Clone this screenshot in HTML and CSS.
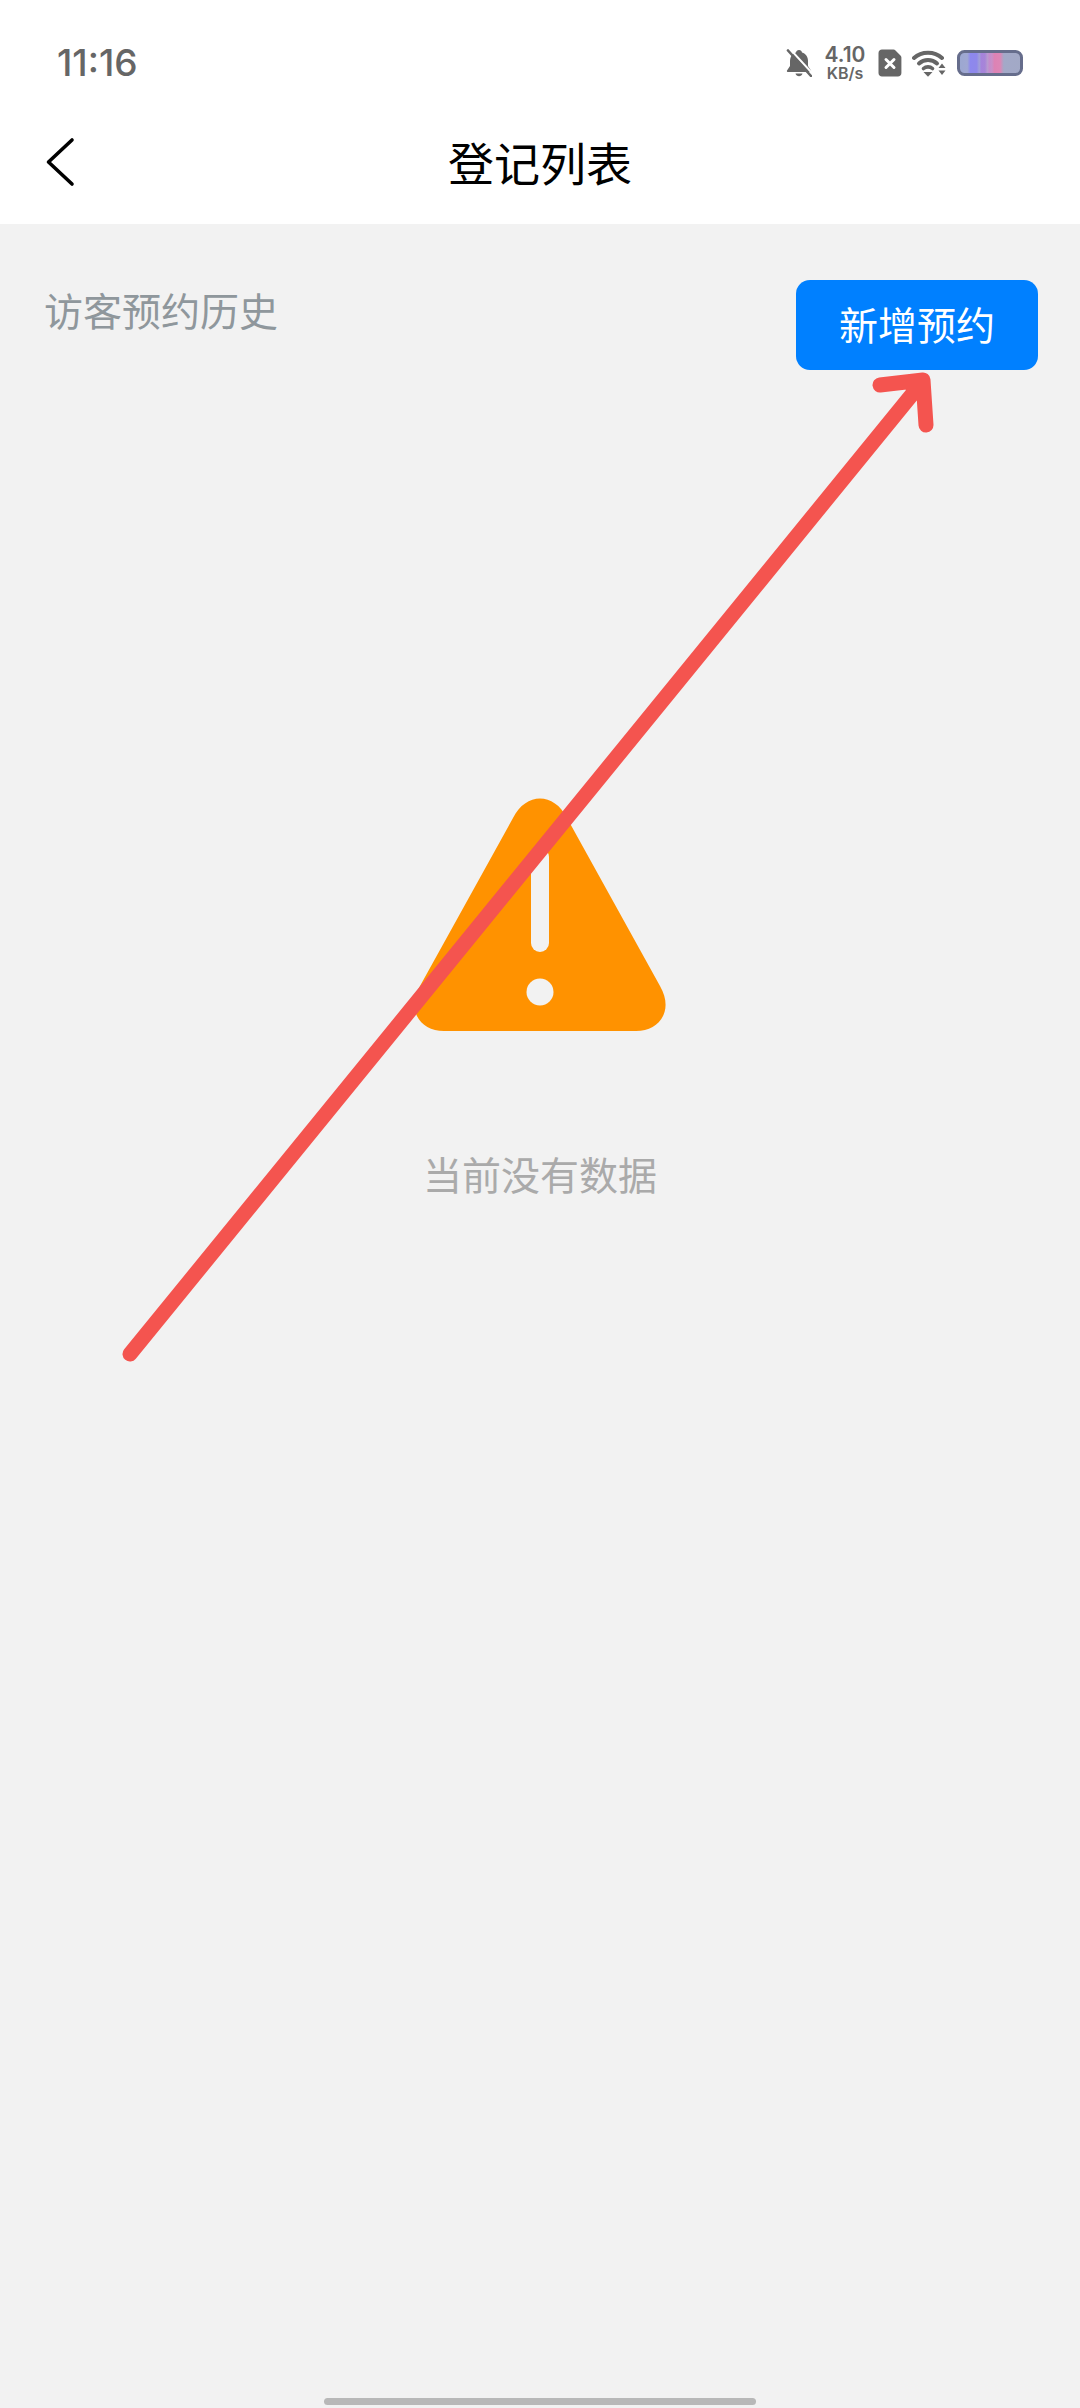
FILE: index.html
```html
<!DOCTYPE html>
<html>
<head>
    <title>登记列表</title>
    <link rel="stylesheet" href="styles.css">
</head>
<body>
    <div class="page">
        <div class="top-area">
            <div class="status-bar">
                <span class="time">11:16</span>
                <div class="status-icons">
                    <svg class="icon-bell" width="26" height="28" viewBox="0 0 26 28">
                        <path d="M13 1c1.700 0 2.800 1 3 2.400C20 4.600 22 8 22 12v5l3 4.500c.4.800-.1 1.500-1 1.500H2c-.9 0-1.400-.7-1-1.500L4 17v-5c0-4 2-7.400 6-8.600C10.200 2 11.300 1 13 1z" fill="#666"/>
                        <path d="M9.500 24.500h7c-.5 1.700-1.900 2.700-3.500 2.700s-3-1-3.500-2.700z" fill="#666"/>
                        <path d="M4 0l23 25" stroke="#fff" stroke-width="2"/>
                        <path d="M2 1.500l23 25.500" stroke="#666" stroke-width="2.600" stroke-linecap="round"/>
                    </svg>
                    <div class="net-speed">
                        <span class="net-value">4.10</span>
                        <span class="net-unit">KB/s</span>
                    </div>
                    <svg class="icon-sim" width="24" height="28" viewBox="0 0 24 28">
                        <path d="M4 0.500h11.500c.8 0 1.400.3 2 .9l5 5c.6.600.9 1.200.9 2V24c0 2-1.500 3.500-3.500 3.500H4C2 27.500.5 26 .5 24V4C.5 2 2 .5 4 .5z" fill="#666"/>
                        <path d="M8 10.500l8 8M16 10.500l-8 8" stroke="#fff" stroke-width="3" stroke-linecap="round"/>
                    </svg>
                    <svg class="icon-wifi" width="34" height="28" viewBox="0 0 34 28">
                        <path d="M2 9C9.500 2 22.500 2 30 9" fill="none" stroke="#666" stroke-width="4" stroke-linecap="round"/>
                        <path d="M7 14.500C12 9.800 20 9.800 25 14.500" fill="none" stroke="#666" stroke-width="4" stroke-linecap="round"/>
                        <path d="M11.500 19.500c2.500-2.200 6.500-2.200 9 0" fill="none" stroke="#666" stroke-width="3.600" stroke-linecap="round"/>
                        <path d="M11.500 23h9l-4.500 4.800z" fill="#666"/>
                        <path d="M30 14.500l3.500 4.500h-7zM26.500 21.500h7l-3.500 4.500z" fill="#666"/>
                    </svg>
                    <svg class="icon-battery" width="66" height="26" viewBox="0 0 66 26">
                        <defs>
                            <linearGradient id="batteryFill" x1="0" x2="1" y1="0" y2="0">
                                <stop offset="0" stop-color="#9ba7d0"/>
                                <stop offset="0.14" stop-color="#a0a8d2"/>
                                <stop offset="0.19" stop-color="#8d88ee"/>
                                <stop offset="0.29" stop-color="#8f88ea"/>
                                <stop offset="0.33" stop-color="#a0a0d8"/>
                                <stop offset="0.36" stop-color="#a583dc"/>
                                <stop offset="0.42" stop-color="#a785d8"/>
                                <stop offset="0.46" stop-color="#b89ad0"/>
                                <stop offset="0.49" stop-color="#c48ccc"/>
                                <stop offset="0.53" stop-color="#c890c8"/>
                                <stop offset="0.57" stop-color="#dd82b4"/>
                                <stop offset="0.66" stop-color="#dd86b6"/>
                                <stop offset="0.72" stop-color="#a3a9c8"/>
                                <stop offset="1" stop-color="#a2a9c6"/>
                            </linearGradient>
                        </defs>
                        <rect x="1.500" y="1.500" width="63" height="23" rx="6" fill="url(#batteryFill)" stroke="#666d8c" stroke-width="3"/>
                    </svg>
                </div>
            </div>
            <div class="nav-bar">
                <svg class="back-icon" width="30" height="50" viewBox="0 0 30 50">
                    <path d="M27 3L3.500 25 27 47" fill="none" stroke="#000" stroke-width="3.600" stroke-linecap="round" stroke-linejoin="round"/>
                </svg>
                <h1 class="nav-title">登记列表</h1>
            </div>
        </div>

        <div class="content">
            <div class="content-head">
                <span class="history-label">访客预约历史</span>
                <button class="add-btn">新增预约</button>
            </div>
            <div class="empty-state">
                <svg class="warn-icon" width="252" height="234" viewBox="0 0 252 234">
                    <path d="M99 20C112 -6 140 -6 153 20L246 188C260 212 246 233 222 233H30C6 233 -8 212 6 188z" fill="#ff9200"/>
                    <rect x="117" y="50" width="18" height="104" rx="9" fill="#f2f2f2"/>
                    <circle cx="126" cy="194" r="13.500" fill="#f2f2f2"/>
                </svg>
                <p class="empty-text">当前没有数据</p>
            </div>
        </div>

        <div class="home-bar"></div>

        <svg class="annotation" width="1080" height="2408" viewBox="0 0 1080 2408">
            <path d="M130 1354L923 381M880 385L923 380L926 425" fill="none" stroke="#f4544f" stroke-width="15" stroke-linecap="round" stroke-linejoin="round"/>
        </svg>
    </div>
</body>
</html>
```

FILE: styles.css
```css
* {
    box-sizing: border-box;
}
html, body {
    margin: 0;
    padding: 0;
}
body {
    font-family: "Noto Sans CJK SC", "Noto Sans", sans-serif;
}
.page {
    position: relative;
    width: 1080px;
    height: 2408px;
    background-color: #f2f2f2;
    display: flex;
    flex-direction: column;
    overflow: hidden;
}
.top-area {
    height: 224px;
    background-color: #fff;
    flex-shrink: 0;
}
.status-bar {
    height: 125px;
    padding: 0 57px 0 57px;
    display: flex;
    justify-content: space-between;
    align-items: center;
}
.time {
    font-family: "Inter", sans-serif;
    font-size: 37px;
    font-weight: 500;
    color: #666;
}
.status-icons {
    display: flex;
    align-items: center;
}
.icon-bell {
    margin-right: 12px;
}
.net-speed {
    display: flex;
    flex-direction: column;
    align-items: center;
    width: 42px;
    margin-right: 12px;
    font-family: "Inter", sans-serif;
    font-weight: 600;
    color: #666;
}
.net-value {
    font-size: 21px;
    line-height: 21px;
}
.net-unit {
    font-size: 16px;
    line-height: 17px;
}
.icon-sim {
    margin-right: 10px;
}
.icon-wifi {
    margin-right: 11px;
}
.nav-bar {
    height: 73px;
    position: relative;
    display: flex;
    align-items: center;
    justify-content: center;
}
.back-icon {
    position: absolute;
    left: 45px;
    top: 12px;
}
.nav-title {
    margin: 0;
    font-size: 46px;
    line-height: 73px;
    font-weight: 400;
    color: #000;
}
.content {
    flex: 1;
    display: flex;
    flex-direction: column;
}
.content-head {
    display: flex;
    justify-content: space-between;
    align-items: flex-start;
    padding: 55px 42px 0 44px;
}
.history-label {
    font-size: 39px;
    line-height: 60px;
    color: #8f979c;
}
.add-btn {
    width: 242px;
    height: 90px;
    margin-top: 1px;
    padding: 0 0 4px;
    background-color: #0080ff;
    color: white;
    border: none;
    border-radius: 14px;
    font-family: inherit;
    font-size: 39px;
}
.empty-state {
    display: flex;
    flex-direction: column;
    align-items: center;
    padding-top: 428px;
}
.warn-icon {
    display: block;
}
.empty-text {
    margin: 111px 0 0;
    font-size: 39px;
    line-height: 60px;
    color: #aaa;
}
.home-bar {
    position: absolute;
    left: 324px;
    bottom: 3px;
    width: 432px;
    height: 7px;
    border-radius: 4px;
    background-color: #b8b8b8;
}
.annotation {
    position: absolute;
    left: 0;
    top: 0;
    pointer-events: none;
}
```
